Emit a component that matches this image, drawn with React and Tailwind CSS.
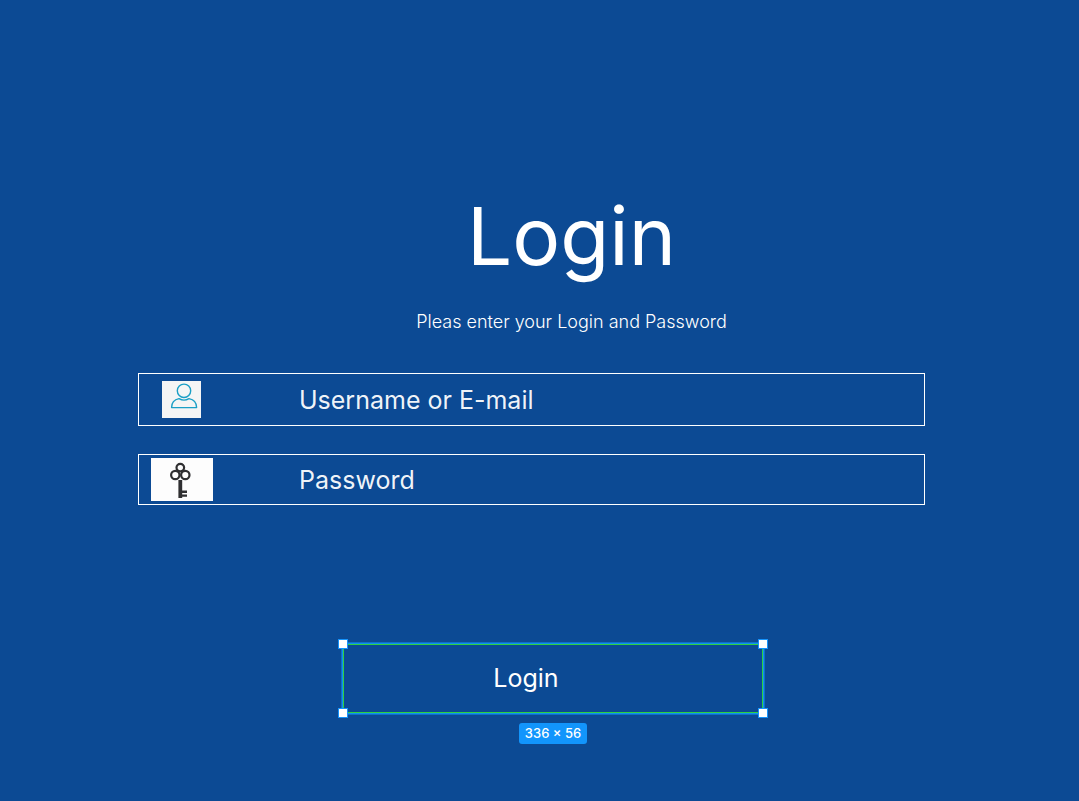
import React from "react";

function UserIcon() {
  return (
    <svg viewBox="0 0 39 37" className="h-[37px] w-[39px] bg-[#f5f5f5]" fill="none" stroke="#1b9fc6" strokeWidth="1.4" aria-hidden="true">
      <circle cx="22" cy="9.8" r="6.7" />
      <path d="M9.6 26.6 C9.6 21 12.6 18.4 17 17.6 C20 19.4 24 19.4 27 17.6 C31.4 18.4 34.6 21 34.6 26.6 Z" strokeLinejoin="round" />
    </svg>
  );
}

function KeyIcon() {
  return (
    <svg viewBox="0 0 62 43" className="h-[43px] w-[62px] bg-[#fdfdfd]" fill="none" stroke="#2f2f31" aria-hidden="true">
      <g strokeWidth="2.2">
        <circle cx="29.3" cy="9.6" r="3.8" />
        <circle cx="24.3" cy="17" r="4.2" />
        <circle cx="34.3" cy="17" r="4.2" />
      </g>
      <path d="M29.3 22 V40" strokeWidth="3.8" />
      <path d="M31 33.8 H36 M31 37.6 H36" strokeWidth="2.4" />
    </svg>
  );
}

function Field({ id, type, text, icon, className }) {
  return (
    <div className={`grid grid-cols-[160px_1fr] items-center border border-white ${className}`}>
      <label htmlFor={id} aria-label={text} className="flex w-[97px] justify-center pr-3">
        {icon}
      </label>
      <input
        id={id}
        type={type}
        placeholder={text}
        className="h-10 w-full min-w-0 bg-transparent text-[25px] text-white outline-none placeholder:text-white/95"
      />
    </div>
  );
}

const handles = ["-left-[5px] -top-[5px]", "-right-[5px] -top-[5px]", "-left-[5px] -bottom-[5px]", "-right-[5px] -bottom-[5px]"];

export default function App() {
  return (
    <main className="min-h-screen bg-[#0c4a94] pt-[188px] pr-[154px] pb-14 pl-[138px] font-[Inter,sans-serif] text-white">
      <header className="pl-20 text-center">
        <h1 className="text-[80px] leading-[96px]">Login</h1>
        <p className="mt-[26px] text-[18px] leading-6 font-light">Pleas enter your Login and Password</p>
      </header>

      <form className="mt-[39px]" onSubmit={(e) => e.preventDefault()}>
        <Field id="username" type="text" text="Username or E-mail" icon={<UserIcon />} className="h-[53px]" />
        <Field id="password" type="password" text="Password" icon={<KeyIcon />} className="mt-7 h-[51px]" />

        <div className="mt-[138px] flex flex-col items-center pl-[43px]">
          <div className="relative w-full max-w-[422px] border border-[#1090f0] ring-1 ring-[#0f6fc8]">
            <button type="submit" className="block h-[69px] w-full border border-[#2fd03f] pr-[54px] text-[25px]">
              Login
            </button>
            {handles.map((place) => (
              <span key={place} className={`absolute h-[10px] w-[10px] border border-[#1492fb] bg-white ${place}`} />
            ))}
          </div>
          <output className="mt-[9px] rounded-[3px] bg-[#1295fc] px-1.5 text-[13px] leading-[21px] font-medium">336 × 56</output>
        </div>
      </form>
    </main>
  );
}
